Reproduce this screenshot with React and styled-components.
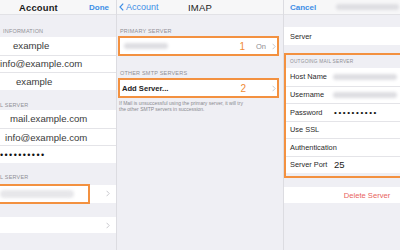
import styled, { createGlobalStyle } from "styled-components";

const GlobalStyle = createGlobalStyle`
  html, body { margin: 0; padding: 0; }
  body {
    background: #efeff4;
    font-family: "Liberation Sans", Arial, sans-serif;
    -webkit-font-smoothing: antialiased;
  }
`;

function Chevron() {
  return (
    <ChevronIcon width="4" height="7" viewBox="0 0 4 7">
      <path d="M0.6 0.8 L3.2 3.5 L0.6 6.2" fill="none" stroke="#c3c3c8" strokeWidth="0.9" />
    </ChevronIcon>
  );
}

function BackChevron() {
  return (
    <svg width="5" height="8" viewBox="0 0 5 8">
      <path d="M4.2 0.6 L1 4 L4.2 7.4" fill="none" stroke="#3d8ee6" strokeWidth="1.2" />
    </svg>
  );
}

export default function App() {
  return (
    <>
      <GlobalStyle />
      <Screen>
        <Panel $w={116}>
          <Stack $w={116}>
            <NavBar $pl={19} $pr={7}>
              <Title $size={9.4}>Account</Title>
              <Side $end>
                <NavLink>Done</NavLink>
              </Side>
            </NavBar>
            <SectionLabel $pt={12.5} $pb={2.5} $pl={3}>INFORMATION</SectionLabel>
            <Group>
              <Row $h={17.5}><BigValue $indent={13}>example</BigValue></Row>
              <Row $h={17.5}><BigValue $indent={0}>info@example.com</BigValue></Row>
              <Row $h={17.5}><BigValue $indent={16}>example</BigValue></Row>
            </Group>
            <SectionLabel $pt={12} $pb={1.5} $pl={0}>L SERVER</SectionLabel>
            <Group>
              <Row $h={17.7}><BigValue $indent={10}>mail.example.com</BigValue></Row>
              <Row $h={17.7}><BigValue $indent={5}>info@example.com</BigValue></Row>
              <Row $h={17.7}><Dots $indent={0}>••••••••••</Dots></Row>
            </Group>
            <SectionLabel $pt={11.4} $pb={3.5} $pl={0}>L SERVER</SectionLabel>
            <Group>
              <Row $h={18} $pr={6}>
                <Mark />
                <Blur $w={74} $h={8} $ml={0} $tone="#e7e7ea" />
                <Spacer />
                <Chevron />
              </Row>
            </Group>
            <Group $mt={14}>
              <Row $h={16.5} $pr={6}>
                <Spacer />
                <Chevron />
              </Row>
            </Group>
          </Stack>
        </Panel>

        <Panel $w={167} $divider>
          <Stack $w={166}>
            <NavBar $pl={2} $pr={2}>
              <Side>
                <BackLink>
                  <BackChevron />
                  Account
                </BackLink>
              </Side>
              <Title $weight={400} $size={9.5}>IMAP</Title>
              <Side />
            </NavBar>
            <SectionLabel $pt={13} $pb={1} $pl={3}>PRIMARY SERVER</SectionLabel>
            <Highlight $ml={1} $mr={4}>
              <Row $h={16} $pl={3} $pr={1}>
                <Blur $w={44} $h={6} $ml={1} />
                <Spacer />
                <Num $mr={11}>1</Num>
                <Detail>On</Detail>
                <Chevron />
              </Row>
            </Highlight>
            <SectionLabel $pt={13.5} $pb={1.5} $pl={3}>OTHER SMTP SERVERS</SectionLabel>
            <Highlight $ml={1} $mr={4}>
              <Row $h={16} $pl={2} $pr={1}>
                <Strong>Add Server...</Strong>
                <Spacer />
                <Num $mr={26}>2</Num>
                <Chevron />
              </Row>
            </Highlight>
            <Footnote>
              If Mail is unsuccessful using the primary server, it will try
              <br />
              the other SMTP servers in succession.
            </Footnote>
          </Stack>
        </Panel>

        <Panel $w={117} $divider>
          <Stack $w={166}>
            <NavBar $pl={6} $pr={6}>
              <Side>
                <NavLink>Cancel</NavLink>
              </Side>
              <Blur $w={63} $h={6} $ml={0} />
              <Side />
            </NavBar>
            <Group $mt={12}>
              <Row $h={18} $pl={6}>
                <Label>Server</Label>
              </Row>
            </Group>
            <Highlight $mt={8} $pb={3}>
              <SectionLabel $pt={3} $pb={3} $pl={4} $size={4.8}>OUTGOING MAIL SERVER</SectionLabel>
              <Group>
                <Row $h={17.5} $pl={4}>
                  <Label $w={43}>Host Name</Label>
                  <Blur $w={64} $h={6} $ml={0} />
                </Row>
                <Row $h={17.5} $pl={4}>
                  <Label $w={43}>Username</Label>
                  <Blur $w={64} $h={6} $ml={0} />
                </Row>
                <Row $h={17.5} $pl={4}>
                  <Label $w={44}>Password</Label>
                  <Dots $indent={0} $small>••••••••••</Dots>
                </Row>
                <Row $h={17.5} $pl={4}>
                  <Label>Use SSL</Label>
                </Row>
                <Row $h={17.5} $pl={4}>
                  <Label>Authentication</Label>
                </Row>
                <Row $h={17.5} $pl={4}>
                  <Label $w={44}>Server Port</Label>
                  <PortValue>25</PortValue>
                </Row>
              </Group>
            </Highlight>
            <Group $mt={9}>
              <Row $h={16} $center>
                <Danger>Delete Server</Danger>
              </Row>
            </Group>
          </Stack>
        </Panel>
      </Screen>
    </>
  );
}

const Screen = styled.div`
  display: flex;
  width: 400px;
  height: 250px;
  overflow: hidden;
  background: #efeff4;
`;

const Panel = styled.div`
  flex: none;
  width: ${(p) => p.$w}px;
  height: 100%;
  box-sizing: border-box;
  overflow: hidden;
  border-left: ${(p) => (p.$divider ? "1px solid #dcdce1" : "none")};
`;

const Stack = styled.div`
  width: ${(p) => p.$w}px;
  display: flex;
  flex-direction: column;
`;

const NavBar = styled.div`
  height: 15px;
  box-sizing: border-box;
  display: flex;
  align-items: center;
  padding: 0 ${(p) => p.$pr}px 0 ${(p) => p.$pl}px;
  background: #f7f7f8;
  border-bottom: 1px solid #e2e2e6;
`;

const Side = styled.div`
  flex: 1 1 0;
  display: flex;
  justify-content: ${(p) => (p.$end ? "flex-end" : "flex-start")};
`;

const Title = styled.div`
  flex: none;
  font-size: ${(p) => p.$size || 9}px;
  font-weight: ${(p) => p.$weight || 700};
  color: #1a1a1a;
  letter-spacing: 0.2px;
`;

const NavLink = styled.span`
  font-size: 8px;
  font-weight: 700;
  color: #3d8ee6;
`;

const BackLink = styled.span`
  display: flex;
  align-items: center;
  gap: 2px;
  font-size: 9px;
  color: #3d8ee6;
`;

const SectionLabel = styled.div`
  font-size: ${(p) => p.$size || 5.5}px;
  line-height: 7px;
  letter-spacing: 0.2px;
  color: #909096;
  padding: ${(p) => p.$pt}px 0 ${(p) => p.$pb}px ${(p) => p.$pl}px;
  white-space: nowrap;
`;

const Group = styled.div`
  display: flex;
  flex-direction: column;
  background: #fff;
  margin-top: ${(p) => p.$mt || 0}px;
`;

const Row = styled.div`
  position: relative;
  display: flex;
  align-items: center;
  justify-content: ${(p) => (p.$center ? "center" : "flex-start")};
  height: ${(p) => p.$h}px;
  box-sizing: border-box;
  padding: 0 ${(p) => p.$pr || 0}px 0 ${(p) => p.$pl || 0}px;
  background: #fff;
  white-space: nowrap;

  & + & {
    border-top: 1px solid #e4e4e8;
  }
`;

const Highlight = styled.div`
  border: 2px solid #f39140;
  margin: ${(p) => p.$mt || 0}px ${(p) => p.$mr || 0}px 0 ${(p) => p.$ml || 0}px;
  padding-bottom: ${(p) => p.$pb || 0}px;
  background: #efeff4;
`;

const Mark = styled.span`
  position: absolute;
  left: 0;
  top: -1px;
  bottom: -1px;
  width: 90px;
  box-sizing: border-box;
  border: 2px solid #f39140;
  border-left: none;
`;

const Blur = styled.span`
  display: inline-block;
  width: ${(p) => p.$w}px;
  height: ${(p) => p.$h}px;
  margin-left: ${(p) => p.$ml}px;
  border-radius: 4px;
  background: ${(p) => p.$tone || "#dedee2"};
  filter: blur(1.5px);
`;

const Spacer = styled.span`
  flex: 1;
`;

const ChevronIcon = styled.svg`
  flex: none;
`;

const BigValue = styled.span`
  padding-left: ${(p) => p.$indent}px;
  font-size: 9.6px;
  color: #3a3a3a;
`;

const Dots = styled.span`
  padding-left: ${(p) => p.$indent}px;
  font-size: ${(p) => (p.$small ? 8 : 9)}px;
  letter-spacing: ${(p) => (p.$small ? 1.6 : 1.4)}px;
  color: #111;
`;

const Label = styled.span`
  flex: none;
  width: ${(p) => (p.$w ? `${p.$w}px` : "auto")};
  font-size: 7.4px;
  color: #2a2a2a;
`;

const PortValue = styled.span`
  font-size: 9.5px;
  color: #222;
`;

const Strong = styled.span`
  font-size: 7.6px;
  font-weight: 700;
  color: #222;
`;

const Num = styled.span`
  font-size: 10px;
  color: #f08a36;
  margin-right: ${(p) => p.$mr}px;
`;

const Detail = styled.span`
  font-size: 7.5px;
  color: #8e8e93;
  margin-right: 6px;
`;

const Footnote = styled.div`
  padding: 2px 0 0 2px;
  font-size: 5px;
  line-height: 6px;
  color: #8a8a90;
  white-space: nowrap;
`;

const Danger = styled.span`
  font-size: 7.6px;
  color: #e8625c;
`;
